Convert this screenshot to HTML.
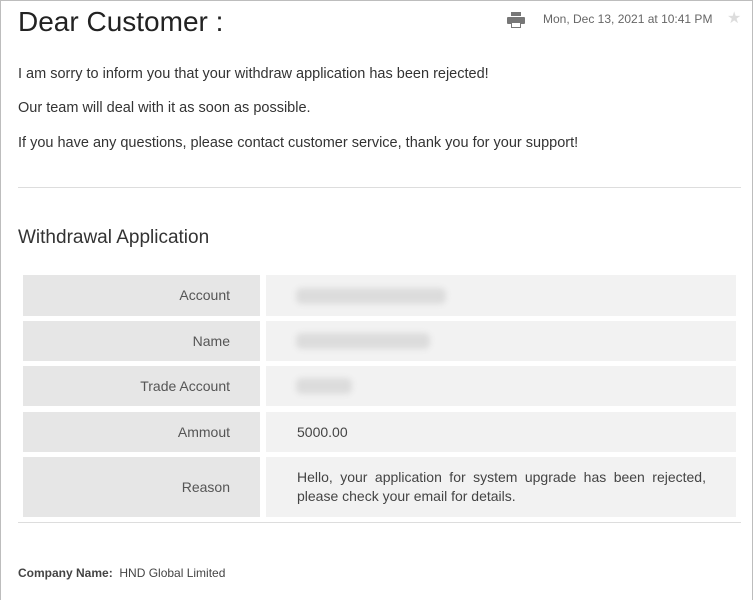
<!DOCTYPE html>
<html><head><meta charset="utf-8"><style>
*{margin:0;padding:0;box-sizing:border-box}
body{width:753px;height:600px;background:#fff;font-family:"Liberation Sans",sans-serif;color:#333;position:relative;overflow:hidden}
.frame{position:absolute;left:0;top:0;width:753px;height:600px;border:1px solid #bdbdbd;border-bottom:none}
.abs{position:absolute;white-space:nowrap}
.lab{position:absolute;left:23px;width:237px;background:#e6e6e6;text-align:right;padding-right:30px;font-size:14px;color:#555}
.val{position:absolute;left:266px;width:470px;background:#f2f2f2;font-size:14px;color:#444;padding-left:31px}
.blur{position:absolute;height:16px;background:#dcdcdc;border-radius:6px;filter:blur(3px)}
</style></head><body>
<div class="frame"></div>
<div class="abs" style="left:18px;top:6px;font-size:28px;color:#222">Dear Customer :</div>
<svg class="abs" style="left:507px;top:12px" width="18" height="16" viewBox="0 0 18 16"><rect x="4" y="0" width="10" height="4" fill="#777"/><rect x="0" y="5" width="18" height="7" rx="1" fill="#777"/><rect x="4" y="10" width="10" height="6" fill="#777"/><rect x="5" y="11" width="8" height="4" fill="#fff"/></svg>
<div class="abs" style="left:543px;top:12px;font-size:12px;color:#666">Mon, Dec 13, 2021 at 10:41 PM</div>
<div class="abs" style="left:727px;top:8px;font-size:16px;color:#ddd">★</div>
<div class="abs" style="left:18px;top:66px;font-size:14.5px">I am sorry to inform you that your withdraw application has been rejected!</div>
<div class="abs" style="left:18px;top:100px;font-size:14.5px">Our team will deal with it as soon as possible.</div>
<div class="abs" style="left:18px;top:135px;font-size:14.5px">If you have any questions, please contact customer service, thank you for your support!</div>
<div class="abs" style="left:18px;top:187px;width:723px;height:1px;background:#ddd"></div>
<div class="abs" style="left:18px;top:227px;font-size:19px;color:#333">Withdrawal Application</div>
<div class="lab" style="top:275px;height:41px;line-height:41px">Account</div><div class="val" style="top:275px;height:41px"></div>
<div class="blur" style="left:296px;top:288px;width:150px"></div>
<div class="lab" style="top:321px;height:40px;line-height:40px">Name</div><div class="val" style="top:321px;height:40px"></div>
<div class="blur" style="left:296px;top:333px;width:134px"></div>
<div class="lab" style="top:366px;height:40px;line-height:40px">Trade Account</div><div class="val" style="top:366px;height:40px"></div>
<div class="blur" style="left:296px;top:378px;width:56px"></div>
<div class="lab" style="top:412px;height:40px;line-height:40px">Ammout</div><div class="val" style="top:412px;height:40px;line-height:40px">5000.00</div>
<div class="lab" style="top:457px;height:60px;line-height:60px">Reason</div><div class="val" style="top:457px;height:60px;padding-top:11px;padding-right:30px;line-height:19px;white-space:normal;text-align:justify">Hello, your application for system upgrade has been rejected, please check your email for details.</div>
<div class="abs" style="left:18px;top:522px;width:723px;height:1px;background:#ddd"></div>
<div class="abs" style="left:18px;top:566px;font-size:12px;color:#444"><b>Company Name:</b>&nbsp; HND Global Limited</div>
</body></html>
